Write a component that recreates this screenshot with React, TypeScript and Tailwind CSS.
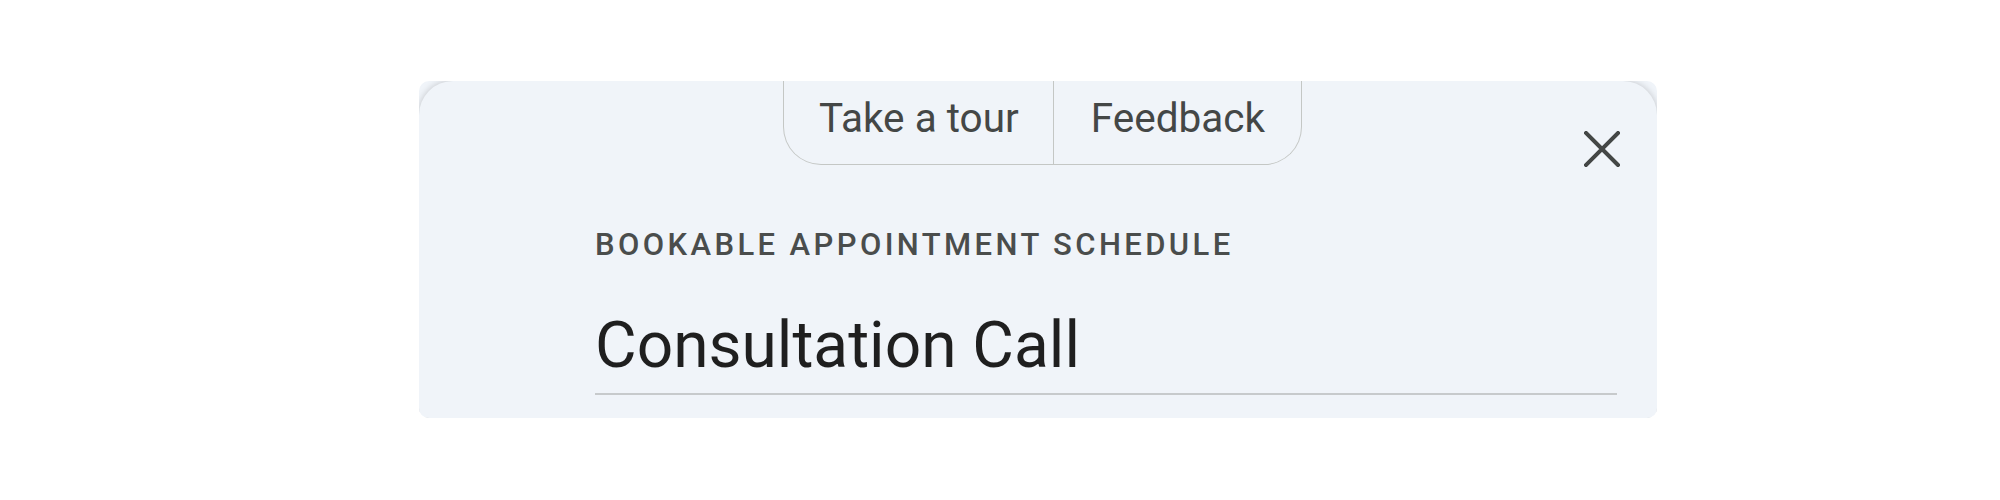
import React from 'react';

const CloseIcon: React.FC = () => (
  <svg width="36" height="36" viewBox="0 0 36 36" fill="none">
    <path d="M2 2L34 34M34 2L2 34" stroke="#444746" strokeWidth="4" strokeLinecap="square" />
  </svg>
);

const App: React.FC = () => {
  return (
    <div className="w-[2000px] h-[500px] bg-white pt-[81px] pl-[419px]" style={{ fontFamily: 'Roboto, "Open Sans", sans-serif' }}>
      <div className="w-[1238px] h-[337px] rounded-[10px] overflow-hidden bg-[#f0f4f9]">
        <div className="h-full rounded-t-[34px] bg-[#f0f4f9] shadow-[0_0_7px_rgba(0,0,0,0.2)] flex flex-col">
          {/* top bar: pill tabs + close */}
          <div className="grid grid-cols-[1fr_auto_1fr] h-[83px]">
            <div />
            <div className="flex h-[84px] ml-[9px] border-[1.5px] border-t-0 border-[#c4c7c5] rounded-b-[38px] text-[#444746] text-[40.5px] leading-[40px]">
              <button className="pt-[17px] pl-[35px] pr-[34px] border-r-[1.5px] border-[#c4c7c5] flex items-start">Take a tour</button>
              <button className="pt-[17px] pl-[37px] pr-[36px] flex items-start">Feedback</button>
            </div>
            <div className="flex justify-end">
              <button className="mt-[50px] mr-[37px] h-[36px] w-[36px]">
                <CloseIcon />
              </button>
            </div>
          </div>

          <div className="pl-[176px] pr-[40px] mt-[65px]">
            <div className="text-[31px] leading-[31px] tracking-[3.4px] font-medium text-[#4a4d4c]">BOOKABLE APPOINTMENT SCHEDULE</div>
            <div className="mt-[54px] pb-[15px] border-b-2 border-[#c7cacc] text-[64px] leading-[64px] text-[#1f1f1f]">Consultation Call</div>
          </div>
        </div>
      </div>
    </div>
  );
};

export default App;
